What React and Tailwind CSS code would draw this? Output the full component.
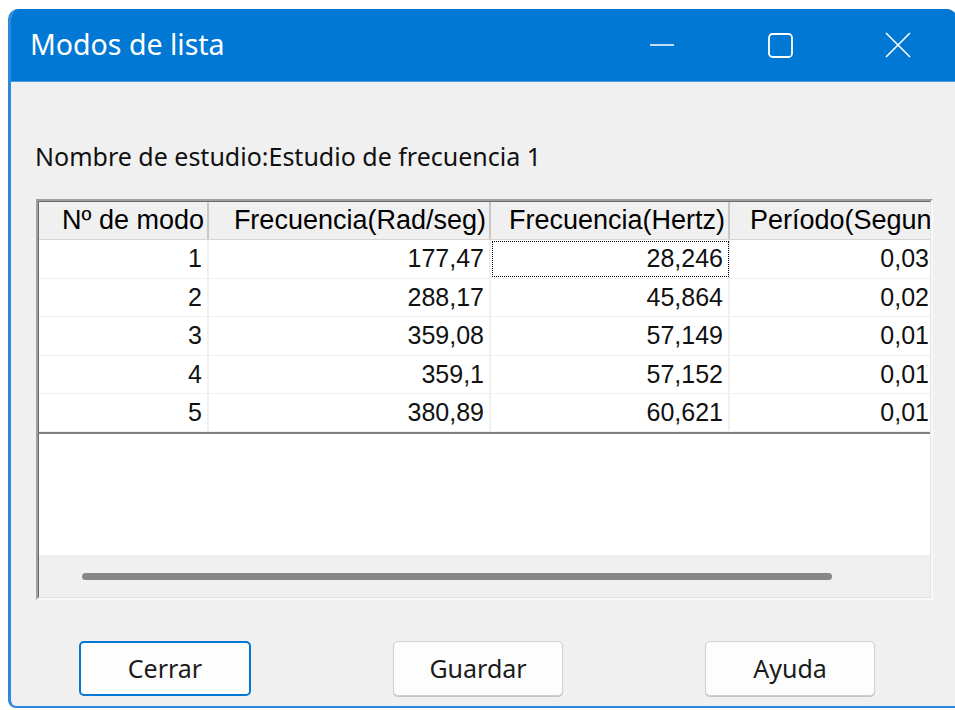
const columns = [
  { label: 'Nº de modo', width: 'w-[170px]' },
  { label: 'Frecuencia(Rad/seg)', width: 'w-[282px]' },
  { label: 'Frecuencia(Hertz)', width: 'w-[239px]' },
];

const modes = [
  { n: '1', rad: '177,47', hz: '28,246', period: '0,03', h: 'h-[39px]' },
  { n: '2', rad: '288,17', hz: '45,864', period: '0,02', h: 'h-[38px]' },
  { n: '3', rad: '359,08', hz: '57,149', period: '0,01', h: 'h-[39px]' },
  { n: '4', rad: '359,1', hz: '57,152', period: '0,01', h: 'h-[38px]' },
  { n: '5', rad: '380,89', hz: '60,621', period: '0,01', h: 'h-[38px]' },
];

const uiFont = { fontFamily: '"Noto Sans", "Open Sans", sans-serif' };
const gridFont = { fontFamily: '"Liberation Sans", Arial, sans-serif' };

function DialogButton({ children, focused }) {
  return (
    <button
      type="button"
      className={
        'w-full h-[55px] rounded-[5px] bg-[#fdfdfd] text-[25px] text-[#1b1b1b] ' +
        (focused
          ? 'border-2 border-[#0078d4]'
          : 'border border-[#d0d0d0] shadow-[0_1px_0_#c4c4c4]')
      }
      style={uiFont}
    >
      {children}
    </button>
  );
}

function ModesGrid() {
  return (
    <div className="ml-[25px] mt-[25px] w-[897px] border-l-2 border-t-2 border-[#a0a0a0] border-r-2 border-r-[#f8f8f8] border-b-2 border-b-[#f8f8f8]">
      <div className="h-[397px] border-l border-t border-[#696969] border-r border-r-[#e3e3e3] border-b border-b-[#e3e3e3] bg-white flex flex-col overflow-hidden" style={gridFont}>
        {/* header */}
        <div className="flex h-[38px] shrink-0 bg-[#f0f0f0] border-b border-[#d5d5d5] text-[27px] text-black">
          {columns.map((c) => (
            <div key={c.label} className={c.width + ' shrink-0 flex items-center justify-end pr-[3px] border-r-2 border-[#c8c8c8] whitespace-nowrap overflow-hidden'}>
              {c.label}
            </div>
          ))}
          <div className="flex-1 flex items-center pl-[20px] whitespace-nowrap overflow-hidden">Período(Segundos)</div>
        </div>

        {/* rows */}
        {modes.map((m, i) => (
          <div key={m.n} className={m.h + ' flex shrink-0 border-b border-[#f0f0f0] text-[25px] text-[#111]'}>
            <div className="w-[170px] shrink-0 flex items-center justify-end pr-[5px] border-r-2 border-[#f0f0f0]">{m.n}</div>
            <div className="w-[282px] shrink-0 flex items-center justify-end pr-[5px] border-r-2 border-[#f0f0f0]">{m.rad}</div>
            <div className={'w-[239px] shrink-0 flex items-center justify-end pr-[5px] border-r-2 border-[#f0f0f0] ' + (i === 0 ? 'outline-1 outline-dotted outline-black -outline-offset-2' : '')}>{m.hz}</div>
            <div className="flex-1 flex items-center justify-end pr-[1px] overflow-hidden">{m.period}</div>
          </div>
        ))}
        <div className="h-[2px] shrink-0 bg-[#808080]" />
        <div className="flex-1 bg-white" />

        {/* horizontal scrollbar */}
        <div className="h-[42px] shrink-0 bg-[#f0f0f0] flex items-center pl-[43px]">
          <div className="h-[7px] w-[750px] rounded-full bg-[#878787]" />
        </div>
      </div>
    </div>
  );
}

function CaptionButtons() {
  return (
    <div className="flex h-full text-white">
      <div className="w-[118px] flex items-center justify-center">
        <svg width="26" height="26" viewBox="0 0 26 26" fill="none" stroke="currentColor" strokeWidth="1.6">
          <path d="M1 13h24" />
        </svg>
      </div>
      <div className="w-[118px] flex items-center justify-center">
        <svg width="25" height="25" viewBox="0 0 25 25" fill="none" stroke="currentColor" strokeWidth="1.8">
          <rect x="1" y="1" width="23" height="23" rx="3.5" />
        </svg>
      </div>
      <div className="w-[118px] flex items-center justify-center">
        <svg width="26" height="26" viewBox="0 0 26 26" fill="none" stroke="currentColor" strokeWidth="1.6">
          <path d="M1 1l24 24M25 1L1 25" />
        </svg>
      </div>
    </div>
  );
}

export default function App() {
  return (
    <div className="w-[955px] h-[710px] bg-white pt-[9px] pl-[8px] overflow-hidden">
      <div className="w-[949px] h-[699px] rounded-t-[10px] rounded-bl-[8px] border-l-[3px] border-b-[2px] border-[#2c89dc] bg-[#f0f0f0] flex flex-col overflow-hidden">
        {/* title bar */}
        <div className="h-[73px] shrink-0 bg-[#0078d4] border-b border-[#4a9be0] flex items-center">
          <div className="flex-1 pl-[19px] text-[28.5px] text-white pb-[1px]" style={uiFont}>Modos de lista</div>
          <CaptionButtons />
        </div>

        {/* body */}
        <div className="flex-1 flex flex-col">
          <div className="pl-[24px] mt-[56px] text-[25px] leading-[36px] text-[#111]" style={uiFont}>
            Nombre de estudio:Estudio de frecuencia 1
          </div>
          <ModesGrid />
          <div className="flex pl-[68px] mt-[41px] gap-[142px]">
            <div className="w-[172px]"><DialogButton focused>Cerrar</DialogButton></div>
            <div className="w-[170px]"><DialogButton>Guardar</DialogButton></div>
            <div className="w-[170px]"><DialogButton>Ayuda</DialogButton></div>
          </div>
        </div>
      </div>
    </div>
  );
}
